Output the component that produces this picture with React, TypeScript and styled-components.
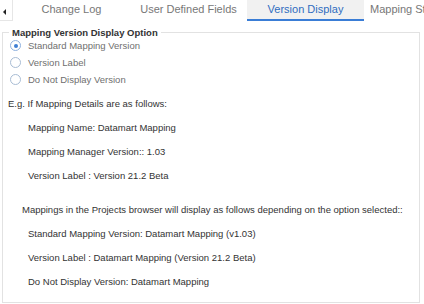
import React, { useState } from "react";
import styled, { createGlobalStyle } from "styled-components";

const GlobalStyle = createGlobalStyle`
  html, body {
    margin: 0;
    padding: 0;
    background: #ffffff;
  }
  body {
    font-family: "Liberation Sans", Arial, sans-serif;
  }
`;

const Page = styled.div`
  width: 424px;
  height: 304px;
  overflow: hidden;
  background: #ffffff;
  display: flex;
  flex-direction: column;
`;

const TabBar = styled.div`
  display: flex;
  height: 21px;
  flex: 0 0 21px;
  overflow: hidden;
  white-space: nowrap;
`;

const ScrollButton = styled.div`
  flex: 0 0 13px;
  border-right: 1px solid #e6e6e6;
  border-bottom: 1px solid #e6e6e6;
  display: flex;
  align-items: center;
  justify-content: flex-start;
  padding-left: 3px;
  padding-top: 4px;
  box-sizing: border-box;
`;

const Arrow = styled.span`
  width: 0;
  height: 0;
  border-top: 3px solid transparent;
  border-bottom: 3px solid transparent;
  border-right: 3px solid #222;
`;

const Tab = styled.div<{ $active?: boolean; $lead?: number }>`
  flex: 0 0 117px;
  box-sizing: border-box;
  text-align: ${(p) => (p.$lead !== undefined ? "left" : "center")};
  padding-left: ${(p) => p.$lead ?? 0}px;
  font-size: 11px;
  line-height: 19px;
  color: ${(p) => (p.$active ? "#2f6dc0" : "#777777")};
  background: ${(p) => (p.$active ? "#f1f1f1" : "transparent")};
  border-bottom: 2px solid ${(p) => (p.$active ? "#3a7dd6" : "transparent")};
  cursor: pointer;
`;

const Fieldset = styled.fieldset`
  margin: 6px 4px 1px 2px;
  padding: 0 4px 0 4px;
  border: 1px solid #e2e2e2;
  flex: 1;
  min-height: 0;
`;

const Legend = styled.legend`
  font-size: 9.5px;
  font-weight: bold;
  color: #333333;
  padding: 0 3px;
  margin-left: 2px;
  line-height: 11px;
`;

const RadioList = styled.div`
  margin-top: -1px;
`;

const RadioRow = styled.label`
  display: flex;
  align-items: center;
  height: 17px;
  font-size: 9.5px;
  color: #6f6f6f;
  cursor: pointer;
`;

const RadioCircle = styled.span<{ $checked?: boolean }>`
  width: 9px;
  height: 9px;
  border-radius: 50%;
  border: 1px solid ${(p) => (p.$checked ? "#8fb1de" : "#a8bcd4")};
  background: #ffffff;
  margin-left: 3px;
  margin-right: 7px;
  display: flex;
  align-items: center;
  justify-content: center;
  &::after {
    content: "";
    width: 4px;
    height: 4px;
    border-radius: 50%;
    background: ${(p) => (p.$checked ? "#3f7fd4" : "transparent")};
  }
`;

const Line = styled.div<{ $indent?: number; $gap?: number }>`
  font-size: 9.5px;
  line-height: 24px;
  height: 24px;
  color: #333333;
  padding-left: ${(p) => p.$indent ?? 0}px;
  margin-top: ${(p) => p.$gap ?? 0}px;
  white-space: nowrap;
`;

const options = ["Standard Mapping Version", "Version Label", "Do Not Display Version"];

export default function App() {
  const [selected, setSelected] = useState(0);
  return (
    <Page>
      <GlobalStyle />
      <TabBar>
        <ScrollButton>
          <Arrow />
        </ScrollButton>
        <Tab>Change Log</Tab>
        <Tab>User Defined Fields</Tab>
        <Tab $active>Version Display</Tab>
        <Tab $lead={6}>Mapping Structure</Tab>
      </TabBar>
      <Fieldset>
        <Legend>Mapping Version Display Option</Legend>
        <RadioList>
          {options.map((o, i) => (
            <RadioRow key={o} onClick={() => setSelected(i)}>
              <RadioCircle $checked={selected === i} />
              {o}
            </RadioRow>
          ))}
        </RadioList>
        <Line $indent={1} $gap={4}>E.g. If Mapping Details are as follows:</Line>
        <Line $indent={21}>Mapping Name: Datamart Mapping</Line>
        <Line $indent={21}>Mapping Manager Version:: 1.03</Line>
        <Line $indent={21}>Version Label : Version 21.2 Beta</Line>
        <Line $indent={15} $gap={10}>
          Mappings in the Projects browser will display as follows depending on the option selected::
        </Line>
        <Line $indent={21}>Standard Mapping Version: Datamart Mapping (v1.03)</Line>
        <Line $indent={21}>Version Label : Datamart Mapping (Version 21.2 Beta)</Line>
        <Line $indent={21}>Do Not Display Version: Datamart Mapping</Line>
      </Fieldset>
    </Page>
  );
}
